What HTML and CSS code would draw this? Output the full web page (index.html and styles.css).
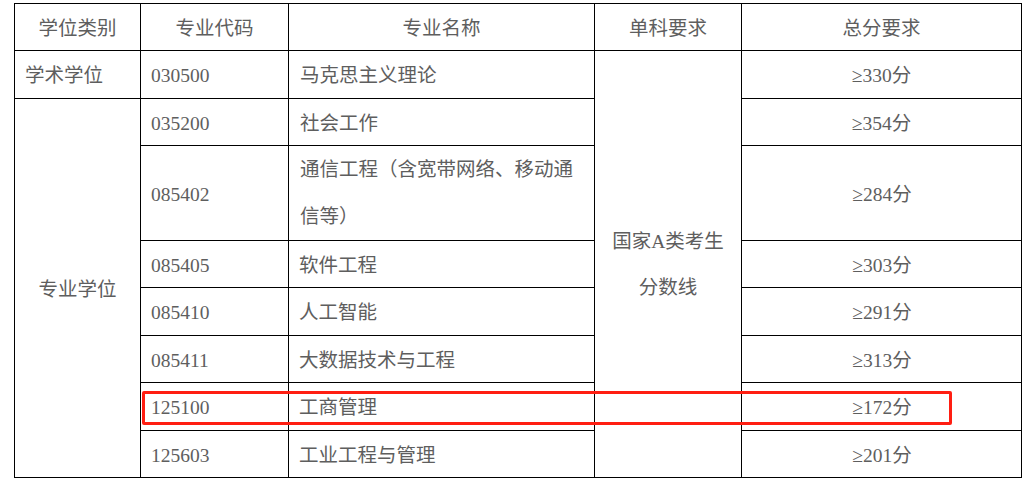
FILE: index.html
```html
<!DOCTYPE html>
<html lang="zh">
<head>
<meta charset="utf-8">
<link rel="stylesheet" href="styles.css">
</head>
<body>
<div class="wrap">
<table class="score">
<colgroup>
<col class="c1"><col class="c2"><col class="c3"><col class="c4"><col class="c5">
</colgroup>
<thead>
<tr><th>学位类别</th><th>专业代码</th><th>专业名称</th><th>单科要求</th><th>总分要求</th></tr>
</thead>
<tbody>
<tr><td class="left">学术学位</td><td class="left">030500</td><td class="left">马克思主义理论</td><td class="center single" rowspan="8">国家A类考生<br>分数线</td><td class="center">≥330分</td></tr>
<tr><td class="center" rowspan="7">专业学位</td><td class="left">035200</td><td class="left">社会工作</td><td class="center">≥354分</td></tr>
<tr><td class="left">085402</td><td class="left name">通信工程（含宽带网络、移动通信等）</td><td class="center">≥284分</td></tr>
<tr><td class="left">085405</td><td class="left">软件工程</td><td class="center">≥303分</td></tr>
<tr><td class="left">085410</td><td class="left">人工智能</td><td class="center">≥291分</td></tr>
<tr><td class="left">085411</td><td class="left">大数据技术与工程</td><td class="center">≥313分</td></tr>
<tr><td class="left">125100</td><td class="left">工商管理</td><td class="center">≥172分</td></tr>
<tr><td class="left">125603</td><td class="left">工业工程与管理</td><td class="center">≥201分</td></tr>
</tbody>
</table>
<div class="mark"></div>
</div>
</body>
</html>
```
FILE: styles.css
```css
html, body {
  margin: 0;
  padding: 0;
  background: #fff;
}
.wrap {
  position: relative;
  padding: 3px 0 0 14px;
}
.score {
  border-collapse: collapse;
  table-layout: fixed;
  width: 1007px;
  font-family: "Liberation Serif", "Noto Sans CJK SC", serif;
  font-size: 19.5px;
  color: #5e5e5e;
}
.c1 { width: 126px; }
.c2 { width: 148px; }
.c3 { width: 306px; }
.c4 { width: 147px; }
.c5 { width: 280px; }
.score th, .score td {
  border: 1px solid #000;
  line-height: 43.4px;
  padding: 3px 10px 0;
  font-weight: normal;
  vertical-align: middle;
}
.score th { text-align: center; }
.left { text-align: left; }
.center { text-align: center; }
.score td:nth-child(3) { padding-left: 11px; }
.score td.name {
  line-height: 46.4px;
  padding: 1px 12px 0 11px;
}
.score td.single {
  line-height: 46.4px;
  padding: 2px 10px 0;
}
.mark {
  position: absolute;
  left: 142px;
  top: 391px;
  width: 804px;
  height: 28px;
  border: 3px solid #ff1e12;
  border-radius: 2px;
}
```
